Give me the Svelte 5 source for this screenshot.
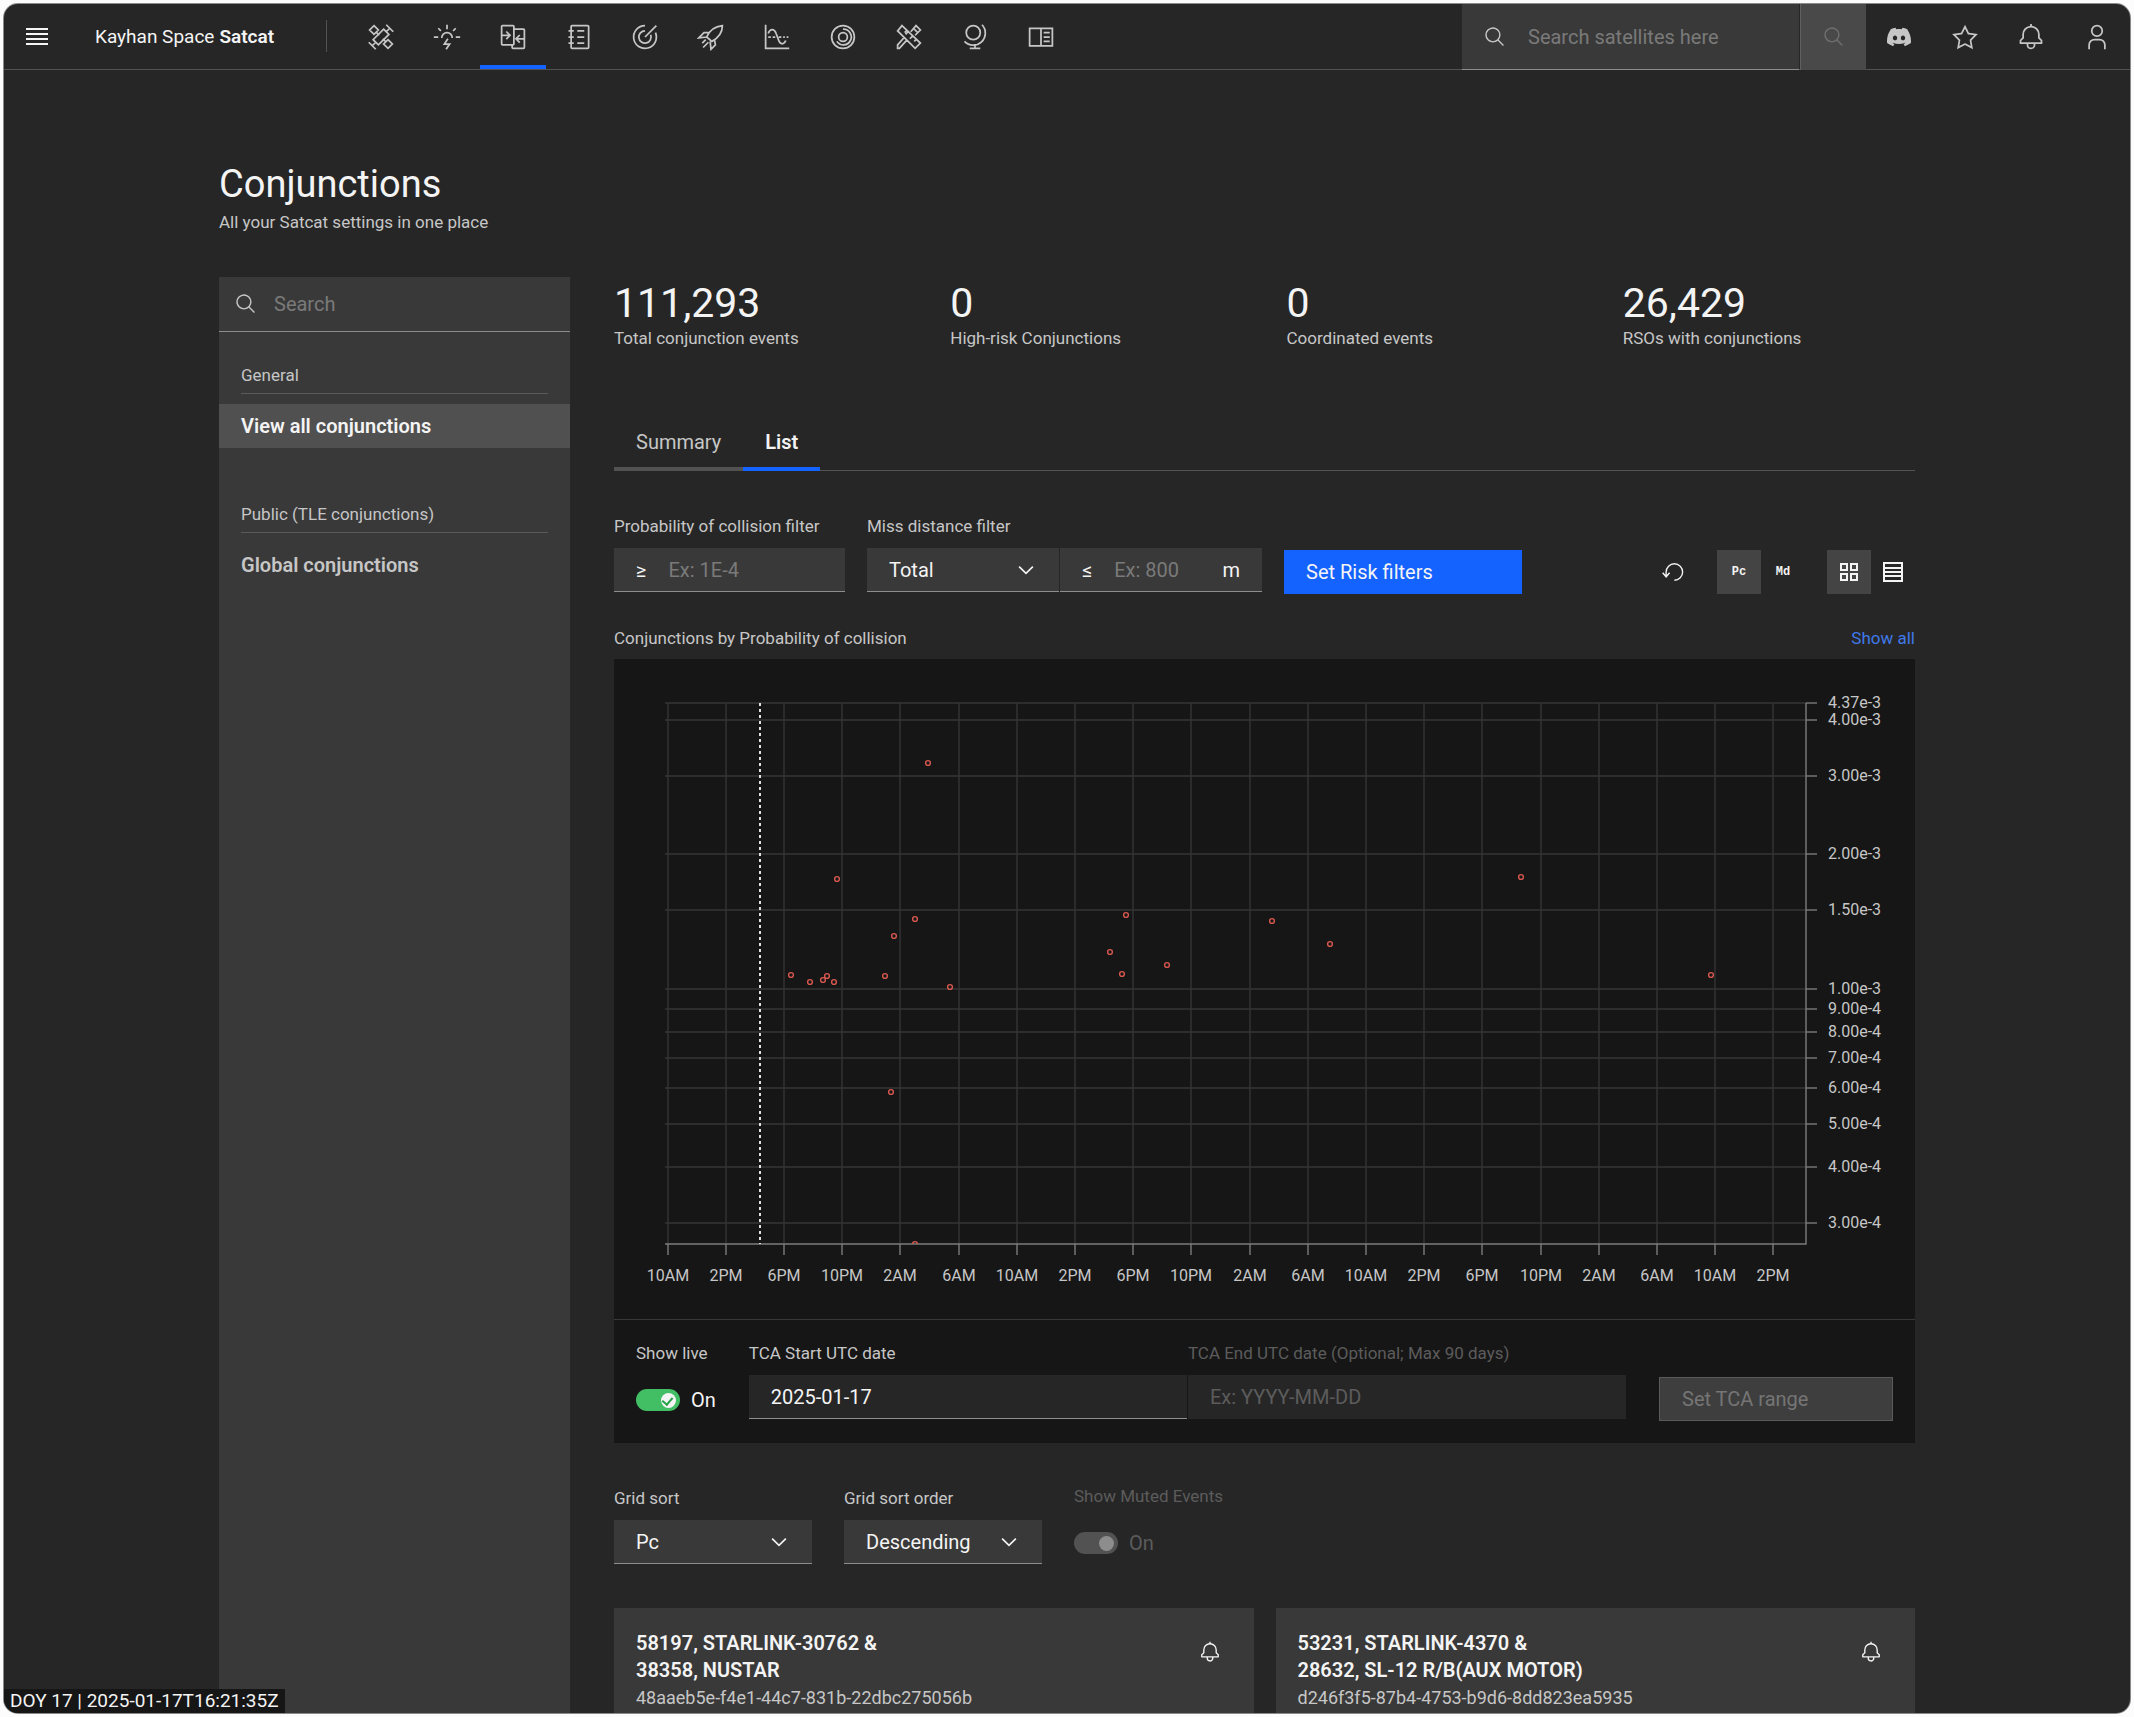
<script>
  const search =
    'M29,27.5859l-7.5521-7.5521a11.0177,11.0177,0,1,0-1.4141,1.4141L27.5859,29ZM4,13a9,9,0,1,1,9,9A9.01,9.01,0,0,1,4,13Z';
  const bell =
    'M28.7071,19.293,26,16.5859V13a10.0136,10.0136,0,0,0-9-9.9492V1H15V3.0508A10.0136,10.0136,0,0,0,6,13v3.5859L3.2929,19.293A1,1,0,0,0,3,20v3a1,1,0,0,0,1,1h7v.7768a5.152,5.152,0,0,0,4.5,5.1987A5.0057,5.0057,0,0,0,21,25V24h7a1,1,0,0,0,1-1V20A1,1,0,0,0,28.7071,19.293ZM19,25a3,3,0,0,1-6,0V24h6Zm8-3H5V20.4141L7.707,17.707A1,1,0,0,0,8,17V13a8,8,0,0,1,16,0v4a1,1,0,0,0,.293.707L27,20.4141Z';
  const star =
    'M16,6.52l2.76,5.58.46,1,1,.15,6.16.89L22,18.44l-.75.73.18,1,1.05,6.13-5.51-2.89L16,23l-.93.49L9.56,26.34l1-6.13.18-1L10,18.44,5.58,14.09l6.16-.89,1-.15.46-1L16,6.52M16,2l-4.55,9.22L1.28,12.69l7.36,7.18L6.9,30,16,25.22,25.1,30,23.36,19.87l7.36-7.17L20.55,11.22Z';
  const user =
    'M16,4a5,5,0,1,1-5,5,5,5,0,0,1,5-5m0-2a7,7,0,1,0,7,7A7,7,0,0,0,16,2ZM26,30H24V25a5,5,0,0,0-5-5H13a5,5,0,0,0-5,5v5H6V25a7,7,0,0,1,7-7h6a7,7,0,0,1,7,7Z';
  const compare =
    'M28,6H18V4a2,2,0,0,0-2-2H4A2,2,0,0,0,2,4V24a2,2,0,0,0,2,2H14v2a2,2,0,0,0,2,2H28a2,2,0,0,0,2-2V8A2,2,0,0,0,28,6ZM4,15h6.17L7.59,17.59,9,19l5-5L9,9,7.59,10.41,10.17,13H4V4H16V24H4ZM16,28V26a2,2,0,0,0,2-2V8H28v9H21.83l2.58-2.59L23,13l-5,5,5,5,1.41-1.41L21.83,19H28v9Z';
  const catalog =
    'M26,2H8A2,2,0,0,0,6,4V8H4v2H6v5H4v2H6v5H4v2H6v4a2,2,0,0,0,2,2H26a2,2,0,0,0,2-2V4A2,2,0,0,0,26,2Zm0,26H8V24h2V22H8V17h2V15H8V10h2V8H8V4H26ZM14,8h8v2h-8ZM14,15h8v2h-8ZM14,22h8v2h-8Z';
  const discord =
    'M20.317 4.3698a19.7913 19.7913 0 00-4.8851-1.5152.0741.0741 0 00-.0785.0371c-.211.3753-.4447.8648-.6083 1.2495-1.8447-.2762-3.68-.2762-5.4868 0-.1636-.3933-.4058-.8742-.6177-1.2495a.077.077 0 00-.0785-.037 19.7363 19.7363 0 00-4.8852 1.515.0699.0699 0 00-.0321.0277C.5334 9.0458-.319 13.5799.0992 18.0578a.0824.0824 0 00.0312.0561c2.0528 1.5076 4.0413 2.4228 5.9929 3.0294a.0777.0777 0 00.0842-.0276c.4616-.6304.8731-1.2952 1.226-1.9942a.076.076 0 00-.0416-.1057c-.6528-.2476-1.2743-.5495-1.8722-.8923a.077.077 0 01-.0076-.1277c.1258-.0943.2517-.1923.3718-.2914a.0743.0743 0 01.0776-.0105c3.9278 1.7933 8.18 1.7933 12.0614 0a.0739.0739 0 01.0785.0095c.1202.099.246.1981.3728.2924a.077.077 0 01-.0066.1276 12.2986 12.2986 0 01-1.873.8914.0766.0766 0 00-.0407.1067c.3604.698.7719 1.3628 1.225 1.9932a.076.076 0 00.0842.0286c1.961-.6067 3.9495-1.5219 6.0023-3.0294a.077.077 0 00.0313-.0552c.5004-5.177-.8382-9.6739-3.5485-13.6604a.061.061 0 00-.0312-.0286zM8.02 15.3312c-1.1825 0-2.1569-1.0857-2.1569-2.419 0-1.3332.9555-2.4189 2.157-2.4189 1.2108 0 2.1757 1.0952 2.1568 2.419 0 1.3332-.9555 2.4189-2.1569 2.4189zm7.9748 0c-1.1825 0-2.1569-1.0857-2.1569-2.419 0-1.3332.9554-2.4189 2.1569-2.4189 1.2108 0 2.1757 1.0952 2.1568 2.419 0 1.3332-.946 2.4189-2.1568 2.4189Z';

  // Header tools: outlines on a 32-unit grid, either filled or stroked.
  const tools = [
    {
      name: 'Satellites',
      stroke:
        'M19 7l6 6-12 12-6-6z M8 3l5 5-5 5-5-5z M11 11l3 3 M24 19l5 5-5 5-5-5z M18 18l3 3 M22 10l4-4 M22 2l8 8 M10 22l-4 4 M2 22l8 8'
    },
    {
      name: 'Reentry',
      stroke: 'M16 2v5 M6 6l3 3 M26 6l-3 3 M1 16h5 M26 16h5 M10 17a6 6 0 1 1 12 0 M17 18l-4 6h6l-4 6'
    },
    { name: 'Conjunctions', fill: compare, current: true },
    { name: 'Catalog', fill: catalog },
    {
      name: 'Radar',
      stroke: 'M16 3a13 13 0 1 0 12 8 M16 9a7 7 0 1 0 6.5 4.5 M16 16L29 3'
    },
    {
      name: 'Launches',
      stroke:
        'M11 16c3-7 9-12 18-13 0 9-5 14-12 18z M13 11l-5 0-6 6 9-1 M20 19l1 6-5 5-1-9 M10 19l-4 4 M13 22l-6 6'
    },
    {
      name: 'Analysis',
      stroke: 'M3 2v27h27 M6 12c2-6 7-6 9 0l3 8c2 5 6 5 8 0 M6 16h3 M11 16h3 M18 16h3 M23 16h2 M27 16h2'
    },
    {
      name: 'Orbits',
      stroke:
        'M29 16a13 13 0 1 1-26 0 13 13 0 0 1 26 0z M21 16a5 5 0 1 1-10 0 5 5 0 0 1 10 0z M16 7a9 9 0 1 1-7 14'
    },
    {
      name: 'Tools',
      stroke:
        'M8 3l21 20-6 6L3 9z M12 13l3-3 M17 18l3-3 M13 9l-2 2 M22 21l2-2 M18 10l6-7 5 5-6 6 M14 19l-9 10H3v-4l8-9 M21 6l5 5'
    },
    {
      name: 'Ground stations',
      stroke: 'M22 11a8 8 0 1 1-16 0 8 8 0 0 1 16 0z M24 2a13 13 0 0 1-20 19 M16 24v5 M10 29h12'
    },
    { name: 'Docs', stroke: 'M3 6h26v20H3z M16 6v20 M19 11h7 M19 16h7 M19 21h7' }
  ];

  const stats = [
    ['111,293', 'Total conjunction events'],
    ['0', 'High-risk Conjunctions'],
    ['0', 'Coordinated events'],
    ['26,429', 'RSOs with conjunctions']
  ];

  const yTicks = [43.7, 40, 30, 20, 15, 10, 9, 8, 7, 6, 5, 4, 3];
  const yOf = (v) => Math.round(330 - Math.log10(v / 10) * 447);
  const yLabel = (v) => (v >= 10 ? (v / 10).toFixed(2) + 'e-3' : v.toFixed(2) + 'e-4');

  const hours = ['10AM', '2PM', '6PM', '10PM', '2AM', '6AM'];
  const xTicks = Array.from({ length: 20 }, (_, i) => ({
    x: Math.round(53.5 + i * 58.2),
    label: hours[i % 6]
  }));

  const events = [
    [223, 220], [301, 260], [280, 277], [177, 316], [196, 323], [209, 321], [213, 317],
    [220, 323], [271, 317], [336, 328], [512, 256], [496, 293], [508, 315], [553, 306],
    [658, 262], [277, 433], [314, 104], [907, 218], [716, 285], [1097, 316], [301, 585]
  ];

  const cards = [
    { a: '58197, STARLINK-30762 &', b: '38358, NUSTAR', id: '48aaeb5e-f4e1-44c7-831b-22dbc275056b' },
    { a: '53231, STARLINK-4370 &', b: '28632, SL-12 R/B(AUX MOTOR)', id: 'd246f3f5-87b4-4753-b9d6-8dd823ea5935' }
  ];
</script>

{#snippet icon(d, size)}
  <svg class={size} viewBox="0 0 32 32" aria-hidden="true"><path {d} fill="currentColor" /></svg>
{/snippet}

{#snippet chevron()}
  <svg class="chevron" viewBox="0 0 16 16" aria-hidden="true">
    <path d="M3 5.5l5 5 5-5" fill="none" stroke="currentColor" stroke-width="1.2" />
  </svg>
{/snippet}

<div class="window">
  <header>
    <button class="tool menu" aria-label="Menu">
      <svg class="mid" viewBox="0 0 22 22" aria-hidden="true">
        <path d="M0 3h22M0 8h22M0 13h22M0 18h22" stroke="currentColor" stroke-width="2" />
      </svg>
    </button>
    <a class="brand" href="#home">Kayhan Space <b>Satcat</b></a>
    <nav aria-label="Tools">
      {#each tools as t}
        <a class="tool" class:current={t.current} href="#{t.name}" aria-label={t.name}>
          {#if t.fill}
            {@render icon(t.fill, 'big')}
          {:else}
            <svg class="big" viewBox="0 0 32 32" aria-hidden="true">
              <path d={t.stroke} fill="none" stroke="currentColor" stroke-width="2" />
            </svg>
          {/if}
        </a>
      {/each}
    </nav>
    <label class="sat-search">
      {@render icon(search, 'mid')}
      <input type="text" placeholder="Search satellites here" aria-label="Search satellites" />
    </label>
    <button class="tool go" aria-label="Run search" disabled>{@render icon(search, 'mid')}</button>
    <a class="tool" href="#discord" aria-label="Discord">
      <svg class="logo" viewBox="0 0 24 24" aria-hidden="true"><path d={discord} fill="currentColor" /></svg>
    </a>
    <button class="tool" aria-label="Favourites">{@render icon(star, 'big')}</button>
    <button class="tool" aria-label="Notifications">{@render icon(bell, 'big')}</button>
    <button class="tool" aria-label="Account">{@render icon(user, 'big')}</button>
  </header>

  <main>
    <h1>Conjunctions</h1>
    <p class="sub">All your Satcat settings in one place</p>

    <div class="columns">
      <aside>
        <label class="side-search">
          {@render icon(search, 'mid')}
          <input type="text" placeholder="Search" aria-label="Search conjunction pages" />
        </label>
        <nav class="side-nav" aria-label="Conjunction pages">
          <h2>General</h2>
          <a class="here" href="#all">View all conjunctions</a>
          <h2>Public (TLE conjunctions)</h2>
          <a href="#global">Global conjunctions</a>
        </nav>
      </aside>

      <section class="content">
        <dl class="stats">
          {#each stats as [value, label]}
            <div>
              <dt>{label}</dt>
              <dd>{value}</dd>
            </div>
          {/each}
        </dl>

        <div class="tabs" role="tablist">
          <button role="tab" aria-selected="false">Summary</button>
          <button role="tab" aria-selected="true">List</button>
        </div>

        <div class="row filters">
          <div class="group pc">
            <label for="pc">Probability of collision filter</label>
            <div class="field">
              <span>≥</span>
              <input id="pc" type="text" placeholder="Ex: 1E-4" />
            </div>
          </div>
          <div class="group md">
            <label for="md">Miss distance filter</label>
            <div class="pair">
              <div class="field pick total">
                <select id="md"><option>Total</option></select>
                {@render chevron()}
              </div>
              <div class="field dist">
                <span>≤</span>
                <input type="text" placeholder="Ex: 800" aria-label="Miss distance in metres" />
                <span>m</span>
              </div>
            </div>
          </div>
          <button class="primary">Set Risk filters</button>
          <div class="switches">
            <button class="sq" aria-label="Reset">
              <svg class="mid" viewBox="0 0 32 32" aria-hidden="true">
                <path d="M18 28a12 12 0 1 0-12-12v6M1 17l5 6 5-6" fill="none" stroke="currentColor" stroke-width="2" />
              </svg>
            </button>
            <div class="pair">
              <button class="sq on">Pc</button>
              <button class="sq">Md</button>
            </div>
            <div class="pair">
              <button class="sq on" aria-label="Grid view">
                <svg class="mini" viewBox="0 0 20 20" aria-hidden="true">
                  <path d="M2 2h6v6H2zM12 2h6v6h-6zM2 12h6v6H2zM12 12h6v6h-6z" fill="none" stroke="currentColor" stroke-width="2" />
                </svg>
              </button>
              <button class="sq" aria-label="List view">
                <svg class="mini" viewBox="0 0 20 20" aria-hidden="true">
                  <path d="M1 1h18v18H1zM1 6h18M1 10h18M1 14h18" fill="none" stroke="currentColor" stroke-width="2" />
                </svg>
              </button>
            </div>
          </div>
        </div>

        <div class="caption">
          <span>Conjunctions by Probability of collision</span>
          <a href="#show-all">Show all</a>
        </div>

        <div class="panel">
          <svg class="chart" viewBox="0 0 1301 660" role="img" aria-label="Conjunctions by probability of collision">
            <defs><clipPath id="plot"><rect x="50" y="40" width="1143" height="545" /></clipPath></defs>
            <g class="grid">
              {#each xTicks as t}<path d="M{t.x} 44V585" />{/each}
              {#each yTicks as v}<path d="M51 {yOf(v)}H1192" />{/each}
            </g>
            <path class="axis" d="M51 585H1192V44" />
            {#each xTicks as t}
              <path class="axis" d="M{t.x} 585v11" />
              <text x={t.x} y="622" text-anchor="middle">{t.label}</text>
            {/each}
            {#each yTicks as v}
              <path class="axis" d="M1192 {yOf(v)}h11" />
              <text x="1214" y={yOf(v) + 5}>{yLabel(v)}</text>
            {/each}
            <path class="now" d="M146 44V585" />
            <g class="dots" clip-path="url(#plot)">
              {#each events as [x, y]}<circle cx={x} cy={y} r="2.4" />{/each}
            </g>
          </svg>

          <div class="row range">
            <div class="group">
              <label for="live">Show live</label>
              <div class="toggle">
                <input id="live" type="checkbox" role="switch" checked />
                <span>On</span>
              </div>
            </div>
            <div class="dates">
              <div class="group">
                <label for="start">TCA Start UTC date</label>
                <div class="field dark"><input id="start" type="text" value="2025-01-17" /></div>
              </div>
              <div class="group off">
                <label for="end">TCA End UTC date (Optional; Max 90 days)</label>
                <div class="field dark"><input id="end" type="text" placeholder="Ex: YYYY-MM-DD" disabled /></div>
              </div>
            </div>
            <button class="primary muted" disabled>Set TCA range</button>
          </div>
        </div>

        <div class="row sorting">
          <div class="group">
            <label for="sort">Grid sort</label>
            <div class="field pick sort">
              <select id="sort"><option>Pc</option></select>
              {@render chevron()}
            </div>
          </div>
          <div class="group">
            <label for="order">Grid sort order</label>
            <div class="field pick sort">
              <select id="order"><option>Descending</option></select>
              {@render chevron()}
            </div>
          </div>
          <div class="group off">
            <label for="mutedEvents">Show Muted Events</label>
            <div class="toggle">
              <input id="mutedEvents" type="checkbox" role="switch" checked disabled />
              <span>On</span>
            </div>
          </div>
        </div>

        <div class="cards">
          {#each cards as c}
            <article>
              <div>
                <h3>{c.a}<br />{c.b}</h3>
                <p>{c.id}</p>
              </div>
              <button class="sq" aria-label="Notify">{@render icon(bell, 'mid')}</button>
            </article>
          {/each}
        </div>
      </section>
    </div>
  </main>

  <div class="status">DOY 17 | 2025-01-17T16:21:35Z</div>
</div>

<style>
  :global(body) {
    background: #fcfcfc;
  }
  * {
    box-sizing: border-box;
  }
  .window {
    position: relative;
    margin: 4px;
    height: calc(100vh - 8px);
    overflow: hidden;
    display: flex;
    flex-direction: column;
    background: #262626;
    border-radius: 14px;
    box-shadow: 0 0 0 1px #8a8a8a;
    color: #f4f4f4;
    font-family: Roboto, 'Liberation Sans', sans-serif;
    font-size: 20px;
    line-height: 24px;
  }
  button,
  input,
  select {
    font: inherit;
    color: inherit;
    background: none;
    border: 0;
    border-radius: 0;
    padding: 0;
    margin: 0;
    min-width: 0;
  }
  a {
    color: inherit;
    text-decoration: none;
  }
  h1,
  h2,
  h3,
  p,
  dl,
  dd {
    margin: 0;
    font-weight: 400;
  }
  svg {
    display: block;
    flex: none;
  }
  .big {
    width: 28px;
    height: 28px;
  }
  .mid {
    width: 22px;
    height: 22px;
  }
  .logo {
    width: 24px;
    height: 24px;
  }
  .mini {
    width: 20px;
    height: 20px;
  }
  input::placeholder {
    color: #7a7a7a;
    opacity: 1;
  }

  header {
    display: flex;
    flex: none;
    height: 66px;
    border-bottom: 1px solid #525252;
    color: #c6c6c6;
  }
  header > * {
    flex: none;
  }
  .tool {
    display: grid;
    place-items: center;
    width: 66px;
  }
  .menu {
    color: #f4f4f4;
  }
  .brand {
    display: flex;
    align-items: center;
    gap: 5px;
    padding: 0 52px 0 25px;
    color: #f4f4f4;
    font-size: 19px;
  }
  .brand b {
    font-weight: 600;
  }
  header nav {
    display: flex;
    flex: 1;
  }
  header nav::before {
    content: '';
    width: 1px;
    height: 32px;
    margin: 16px 21px 0 0;
    background: #525252;
  }
  .current {
    box-shadow: inset 0 -4px #1463ff;
  }
  .sat-search {
    display: flex;
    align-items: center;
    gap: 22px;
    width: 337px;
    height: 66px;
    padding-left: 22px;
    background: #393939;
    border-bottom: 1px solid #8d8d8d;
  }
  .sat-search input,
  .side-search input {
    flex: 1;
  }
  .go {
    height: 66px;
    margin-left: 1px;
    background: #494949;
    color: #6f6f6f;
    border-left: 1px solid #606060;
  }

  main {
    flex: 1;
    display: flex;
    flex-direction: column;
    width: 100%;
    max-width: 1696px;
    min-height: 0;
    margin: 0 auto;
    padding-top: 90px;
  }
  h1 {
    font-size: 38px;
    line-height: 48px;
  }
  .sub {
    margin: 2px 0 43px;
    font-size: 17px;
    color: #c6c6c6;
  }
  .columns {
    flex: 1;
    min-height: 0;
    display: grid;
    grid-template-columns: 351px minmax(0, 1fr);
    gap: 44px;
  }
  aside {
    background: #393939;
  }
  .side-search {
    display: flex;
    align-items: center;
    gap: 17px;
    height: 55px;
    padding: 0 16px;
    border-bottom: 1px solid #8d8d8d;
    color: #c6c6c6;
  }
  h2 {
    margin: 0 22px 10px;
    padding-bottom: 6px;
    border-bottom: 1px solid #5a5a5a;
    color: #c6c6c6;
    font-size: 17px;
    line-height: 24px;
  }
  .side-nav {
    padding-top: 31px;
  }
  .side-nav a {
    display: block;
    padding: 10px 22px;
    margin-bottom: 54px;
    font-weight: 600;
    color: #c6c6c6;
  }
  .side-nav .here {
    background: #505050;
    color: #f4f4f4;
  }

  .content {
    color: #c6c6c6;
  }
  .stats {
    display: grid;
    grid-template-columns: repeat(4, 1fr);
    gap: 44px;
    margin-bottom: 67px;
  }
  .stats div {
    display: flex;
    flex-direction: column-reverse;
  }
  dt {
    font-size: 17px;
    line-height: 22px;
  }
  dd {
    padding-top: 2px;
    font-size: 41px;
    line-height: 48px;
    color: #f4f4f4;
  }
  .tabs {
    display: flex;
    height: 55px;
    box-shadow: inset 0 -1px #525252;
  }
  .tabs button {
    padding: 0 22px;
    border-bottom: 4px solid #525252;
  }
  .tabs button[aria-selected='true'] {
    border-color: #1463ff;
    color: #f4f4f4;
    font-weight: 600;
  }

  .row {
    display: flex;
    align-items: flex-end;
  }
  .group {
    display: flex;
    flex-direction: column;
    gap: 11px;
  }
  .group label {
    font-size: 17px;
    line-height: 22px;
    white-space: nowrap;
  }
  .filters {
    gap: 22px;
    margin: 44px 0 33px;
  }
  .filters .group,
  .dates .group {
    padding-bottom: 2px;
  }
  .pc {
    flex: 0 1 231px;
  }
  .md {
    flex: 0 1 395px;
  }
  .pair {
    display: flex;
  }
  .field {
    display: flex;
    align-items: center;
    gap: 22px;
    height: 44px;
    padding: 0 22px;
    background: #393939;
    border-bottom: 1px solid #8d8d8d;
    color: #f4f4f4;
  }
  .field input {
    flex: 1;
    width: 0;
  }
  .total {
    flex: 0 1 192px;
    margin-right: 1px;
  }
  .dist {
    flex: 1;
  }
  .pick {
    position: relative;
    padding: 0;
  }
  .pick select {
    appearance: none;
    width: 100%;
    height: 100%;
    padding: 0 44px 0 22px;
  }
  .chevron {
    position: absolute;
    right: 22px;
    width: 22px;
    height: 22px;
    pointer-events: none;
  }
  .primary {
    flex: none;
    width: 238px;
    height: 44px;
    padding: 0 22px;
    background: #1463ff;
    color: #f4f4f4;
    text-align: left;
  }
  .switches {
    display: flex;
    gap: 22px;
    margin-left: auto;
    color: #f4f4f4;
  }
  .sq {
    display: grid;
    place-items: center;
    flex: none;
    width: 44px;
    height: 44px;
    color: #f4f4f4;
    font-family: 'Liberation Mono', monospace;
    font-size: 12px;
    font-weight: 700;
  }
  .on {
    background: #444;
  }

  .caption {
    display: flex;
    justify-content: space-between;
    margin-bottom: 10px;
    font-size: 17px;
    line-height: 22px;
  }
  .caption a {
    color: #4079e8;
  }
  .panel {
    background: #161616;
  }
  .chart {
    width: 100%;
    height: auto;
  }
  .chart path {
    fill: none;
    stroke-width: 1.4;
  }
  .grid {
    stroke: #363636;
  }
  .axis {
    stroke: #7c7c7c;
  }
  .chart .now {
    stroke: #e0e0e0;
    stroke-width: 2;
    stroke-dasharray: 3 3;
  }
  .dots circle {
    fill: none;
    stroke: #d8584f;
    stroke-width: 1.4;
  }
  .chart text {
    fill: #c6c6c6;
    font-size: 16px;
  }
  .range {
    padding: 22px;
    border-top: 1px solid #393939;
  }
  .toggle {
    display: flex;
    align-items: center;
    gap: 11px;
    height: 42px;
    margin-top: 4px;
    color: #f4f4f4;
  }
  .toggle input {
    appearance: none;
    display: flex;
    align-items: center;
    justify-content: flex-end;
    position: relative;
    width: 44px;
    height: 22px;
    padding: 0 4px;
    border-radius: 11px;
    background: #42be65;
  }
  .toggle input::before {
    content: '';
    width: 15px;
    height: 15px;
    border-radius: 50%;
    background: #f4f4f4;
  }
  .toggle input::after {
    content: '';
    position: absolute;
    right: 9px;
    top: 6px;
    width: 5px;
    height: 8px;
    border: solid #24a148;
    border-width: 0 2px 2px 0;
    transform: rotate(40deg);
  }
  .dates {
    flex: 1;
    display: grid;
    grid-template-columns: 1fr 1fr;
    gap: 1px;
    margin: 0 33px;
  }
  .dark {
    background: #262626;
  }
  .off,
  .off .toggle,
  .off .field,
  .off input::placeholder {
    color: #5c5c5c;
  }
  .off .field {
    border-color: #262626;
  }
  .off .toggle input {
    background: #525252;
  }
  .off .toggle input::before {
    background: #8d8d8d;
  }
  .off .toggle input::after {
    display: none;
  }
  .muted {
    width: 234px;
    background: #3e3e3e;
    border: 1px solid #5a5a5a;
    color: #757575;
  }
  .sorting {
    gap: 32px;
    margin: 42px 0 44px;
  }
  .sort {
    width: 198px;
  }
  .cards {
    display: grid;
    grid-template-columns: 1fr 1fr;
    gap: 22px;
  }
  article {
    display: flex;
    justify-content: space-between;
    padding: 22px;
    background: #393939;
  }
  h3 {
    color: #f4f4f4;
    font-size: 20px;
    font-weight: 600;
    line-height: 27px;
  }
  article p {
    margin-top: 2px;
    font-size: 18px;
  }
  .status {
    position: absolute;
    left: 0;
    bottom: 0;
    padding: 0 6px;
    background: #161616;
    font-size: 19px;
  }
</style>
